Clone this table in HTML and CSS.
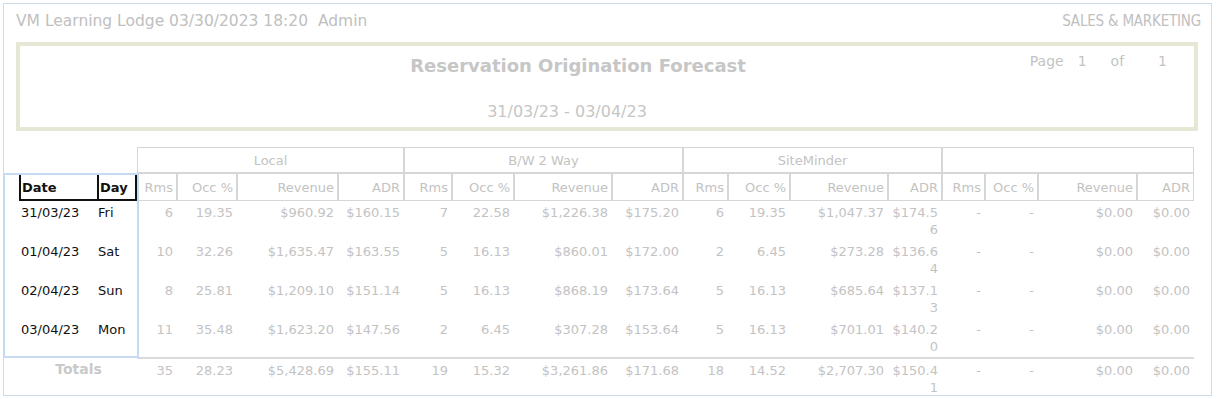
FILE: index.html
```html
<!DOCTYPE html>
<html lang="en">
<head>
<meta charset="utf-8">
<title>Reservation Origination Forecast</title>
<link rel="stylesheet" href="styles.css">
</head>
<body>
<div class="page">
  <header class="topbar">
    <span class="meta">VM Learning Lodge 03/30/2023 18:20&nbsp; Admin</span>
    <span class="dept">SALES &amp; MARKETING</span>
  </header>

  <section class="titlebox">
    <h1 class="title">Reservation Origination Forecast</h1>
    <div class="pageinfo"><span>Page</span><span>1</span><span>of</span><span>1</span></div>
    <div class="range">31/03/23 - 03/04/23</div>
  </section>

  <div class="report">
    <div class="date-frame"></div>
    <table class="grid">
      <colgroup>
        <col class="c-sp"><col class="c-date"><col class="c-day">
        <col class="w40"><col class="w60"><col class="w101"><col class="w66">
        <col class="w48"><col class="w62"><col class="w98"><col class="w71">
        <col class="w45"><col class="w62"><col class="w98"><col class="w54">
        <col class="w43"><col class="w53"><col class="w99"><col class="w57">
      </colgroup>
      <thead>
        <tr class="groups">
          <th colspan="3" class="blank"></th>
          <th colspan="4">Local</th>
          <th colspan="4">B/W 2 Way</th>
          <th colspan="4">SiteMinder</th>
          <th colspan="4"></th>
        </tr>
        <tr class="cols">
          <th class="blank"></th>
          <th class="key key-date">Date</th>
          <th class="key key-day">Day</th>
          <th>Rms</th><th>Occ %</th><th>Revenue</th><th>ADR</th>
          <th>Rms</th><th>Occ %</th><th>Revenue</th><th>ADR</th>
          <th>Rms</th><th>Occ %</th><th>Revenue</th><th>ADR</th>
          <th>Rms</th><th>Occ %</th><th>Revenue</th><th>ADR</th>
        </tr>
      </thead>
      <tbody>
        <tr>
          <td></td><td class="date">31/03/23</td><td class="day">Fri</td>
          <td>6</td><td>19.35</td><td>$960.92</td><td>$160.15</td>
          <td>7</td><td>22.58</td><td>$1,226.38</td><td>$175.20</td>
          <td>6</td><td>19.35</td><td>$1,047.37</td><td class="brk">$174.56</td>
          <td>-</td><td>-</td><td>$0.00</td><td>$0.00</td>
        </tr>
        <tr>
          <td></td><td class="date">01/04/23</td><td class="day">Sat</td>
          <td>10</td><td>32.26</td><td>$1,635.47</td><td>$163.55</td>
          <td>5</td><td>16.13</td><td>$860.01</td><td>$172.00</td>
          <td>2</td><td>6.45</td><td>$273.28</td><td class="brk">$136.64</td>
          <td>-</td><td>-</td><td>$0.00</td><td>$0.00</td>
        </tr>
        <tr>
          <td></td><td class="date">02/04/23</td><td class="day">Sun</td>
          <td>8</td><td>25.81</td><td>$1,209.10</td><td>$151.14</td>
          <td>5</td><td>16.13</td><td>$868.19</td><td>$173.64</td>
          <td>5</td><td>16.13</td><td>$685.64</td><td class="brk">$137.13</td>
          <td>-</td><td>-</td><td>$0.00</td><td>$0.00</td>
        </tr>
        <tr>
          <td></td><td class="date">03/04/23</td><td class="day">Mon</td>
          <td>11</td><td>35.48</td><td>$1,623.20</td><td>$147.56</td>
          <td>2</td><td>6.45</td><td>$307.28</td><td>$153.64</td>
          <td>5</td><td>16.13</td><td>$701.01</td><td class="brk">$140.20</td>
          <td>-</td><td>-</td><td>$0.00</td><td>$0.00</td>
        </tr>
      </tbody>
      <tfoot>
        <tr>
          <td colspan="3" class="totals-label">Totals</td>
          <td>35</td><td>28.23</td><td>$5,428.69</td><td>$155.11</td>
          <td>19</td><td>15.32</td><td>$3,261.86</td><td>$171.68</td>
          <td>18</td><td>14.52</td><td>$2,707.30</td><td class="brk">$150.41</td>
          <td>-</td><td>-</td><td>$0.00</td><td>$0.00</td>
        </tr>
      </tfoot>
    </table>
  </div>
</div>
</body>
</html>
```
FILE: styles.css
```css
* { box-sizing: border-box; }

body {
  margin: 0;
  background: #ffffff;
  font-family: "DejaVu Sans", Verdana, sans-serif;
  color: #c3c3c3;
}

.page {
  margin: 3px 0 0 3px;
  width: 1209px;
  height: 393px;
  border: 1px solid #cbdcee;
}

/* top line */
.topbar {
  display: flex;
  justify-content: space-between;
  align-items: flex-start;
  height: 38px;
  padding: 8px 10px 0 12px;
  font-size: 15.5px;
  line-height: 18px;
  color: #c0c0c0;
}

.dept {
  font-family: "DejaVu Sans Condensed", "DejaVu Sans", sans-serif;
  font-size: 15px;
  letter-spacing: -0.2px;
}

/* title frame */
.titlebox {
  display: grid;
  grid-template-columns: 1fr;
  height: 89px;
  margin: 0 13px 0 12px;
  border: 4px solid #e7e7d5;
}

.title {
  grid-area: 1 / 1;
  justify-self: center;
  margin: 9px 58px 0 0;
  font-size: 18px;
  line-height: 22px;
  font-weight: bold;
  color: #c6c6c6;
}

.pageinfo {
  grid-area: 1 / 1;
  justify-self: end;
  align-self: start;
  display: flex;
  gap: 14px;
  margin: 6px 27px 0 0;
  font-size: 14px;
  line-height: 18px;
  color: #c3c3c3;
}
.pageinfo span:nth-child(3) { margin-left: 10px; }
.pageinfo span:nth-child(4) { margin-left: 20px; }

.range {
  grid-area: 2 / 1;
  justify-self: center;
  margin: 20px 80px 0 0;
  font-size: 16px;
  line-height: 18px;
  color: #c6c6c6;
}

/* report table */
.report {
  position: relative;
  margin-top: 16px;
}

.date-frame {
  position: absolute;
  left: -1px;
  top: 26px;
  width: 136px;
  height: 185px;
  border: 2px solid #c6dbf0;
  pointer-events: none;
}

.grid {
  border-collapse: separate;
  border-spacing: 0;
  table-layout: fixed;
  width: 1190px;
  font-size: 13px;
}

.c-sp { width: 15px; }
.c-date { width: 78px; }
.c-day { width: 40px; }
.w40 { width: 40px; } .w43 { width: 43px; } .w45 { width: 45px; }
.w48 { width: 48px; } .w53 { width: 53px; } .w54 { width: 54px; }
.w57 { width: 57px; } .w60 { width: 60px; } .w62 { width: 62px; }
.w66 { width: 66px; } .w71 { width: 71px; } .w98 { width: 98px; }
.w99 { width: 99px; } .w101 { width: 101px; }

.grid th {
  font-weight: normal;
  color: #c3c3c3;
  border: 1px solid #d6d6d6;
  white-space: nowrap;
  overflow: hidden;
}

.grid th.blank { border: 0; }

.groups th {
  height: 26px;
  font-size: 13px;
  text-align: center;
  vertical-align: middle;
  padding: 0;
}

.cols th {
  height: 28px;
  font-size: 13px;
  text-align: right;
  vertical-align: middle;
  padding: 0 3px 0 0;
}

.cols th.key {
  border: 2px solid #111111;
  color: #111111;
  font-weight: bold;
  text-align: left;
  padding: 0 0 0 1px;
}
.cols th.key-date { border-right: 0; }

.grid td {
  height: 39px;
  padding: 3px 4px 0 2px;
  text-align: right;
  vertical-align: top;
  line-height: 17px;
  white-space: nowrap;
}

.grid td.brk {
  white-space: normal;
  word-break: break-all;
}

.grid td.date,
.grid td.day {
  text-align: left;
  color: #111111;
  font-size: 13px;
}
.grid td.date { padding-left: 2px; }
.grid td.day { padding-left: 1px; }

tfoot td {
  height: 38px;
  border-top: 2px solid #dadada;
}

tfoot td.totals-label {
  border-top: 0;
  text-align: center;
  padding: 4px 0 0 16px;
  font-size: 14px;
  font-weight: bold;
  color: #c9c9c9;
}
```
